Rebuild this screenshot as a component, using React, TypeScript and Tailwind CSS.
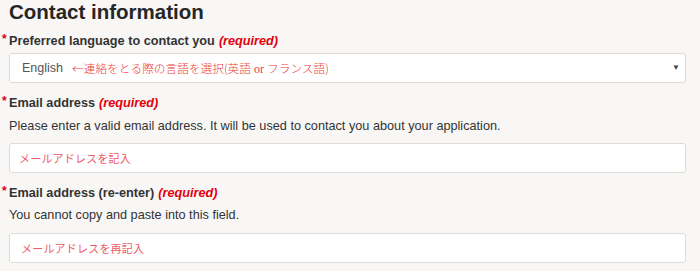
import React from "react";

const cjk = { fontFamily: '"Noto Sans CJK JP", "Liberation Serif", serif' };
const serif = { fontFamily: '"Liberation Serif", serif' };

function Label({ text }: { text: string }) {
  return (
    <div className="flex items-start h-[18px] leading-[18px] text-[12.7px] font-bold text-[#333]">
      <span className="-ml-[7px] w-[7px] text-[#d9000d] text-[12px] leading-[14px]">*</span>
      <span>{text}</span>
      <span className="ml-[4px] italic text-[#e4000f]">(required)</span>
    </div>
  );
}

export default function App() {
  return (
    <div
      className="w-[700px] h-[271px] bg-[#f8f7f5] pl-[9px] pr-[14px] overflow-hidden"
      style={{ fontFamily: '"Liberation Sans", Arial, sans-serif' }}
    >
      <h1 className="h-[26px] leading-[24px] text-[20.5px] font-bold text-[#262626]">Contact information</h1>
      <div className="mt-[6px]">
        <Label text="Preferred language to contact you" />
      </div>
      <div className="mt-[3px] h-[30px] bg-white border border-[#dedbd6] rounded-[3px] flex items-center pl-[12px] pr-[5px]">
        <span className="text-[12.5px] text-[#555]">English</span>
        <span className="ml-[9px] text-[11.7px] text-[#ec3b3b] font-light" style={cjk}>
          ←連絡をとる際の言語を選択(英語<span style={serif} className="text-[12px]"> or </span>フランス語)
        </span>
        <span className="ml-auto text-[8px] text-[#444]">▼</span>
      </div>
      <div className="mt-[11px]">
        <Label text="Email address" />
      </div>
      <div className="mt-[5px] h-[18px] leading-[18px] text-[12.7px] text-[#333]">
        Please enter a valid email address. It will be used to contact you about your application.
      </div>
      <div className="mt-[8px] h-[30px] bg-white border border-[#dedbd6] rounded-[3px] flex items-center pl-[9px]">
        <span className="text-[11px] tracking-[0.2px] text-[#ef5a66]" style={cjk}>メールアドレスを記入</span>
      </div>
      <div className="mt-[11px]">
        <Label text="Email address (re-enter)" />
      </div>
      <div className="mt-[4px] h-[18px] leading-[18px] text-[12.7px] text-[#333]">
        You cannot copy and paste into this field.
      </div>
      <div className="mt-[9px] h-[30px] bg-white border border-[#dedbd6] rounded-[3px] flex items-center pl-[11px]">
        <span className="text-[11px] tracking-[0.2px] text-[#ef5a66]" style={cjk}>メールアドレスを再記入</span>
      </div>
    </div>
  );
}
